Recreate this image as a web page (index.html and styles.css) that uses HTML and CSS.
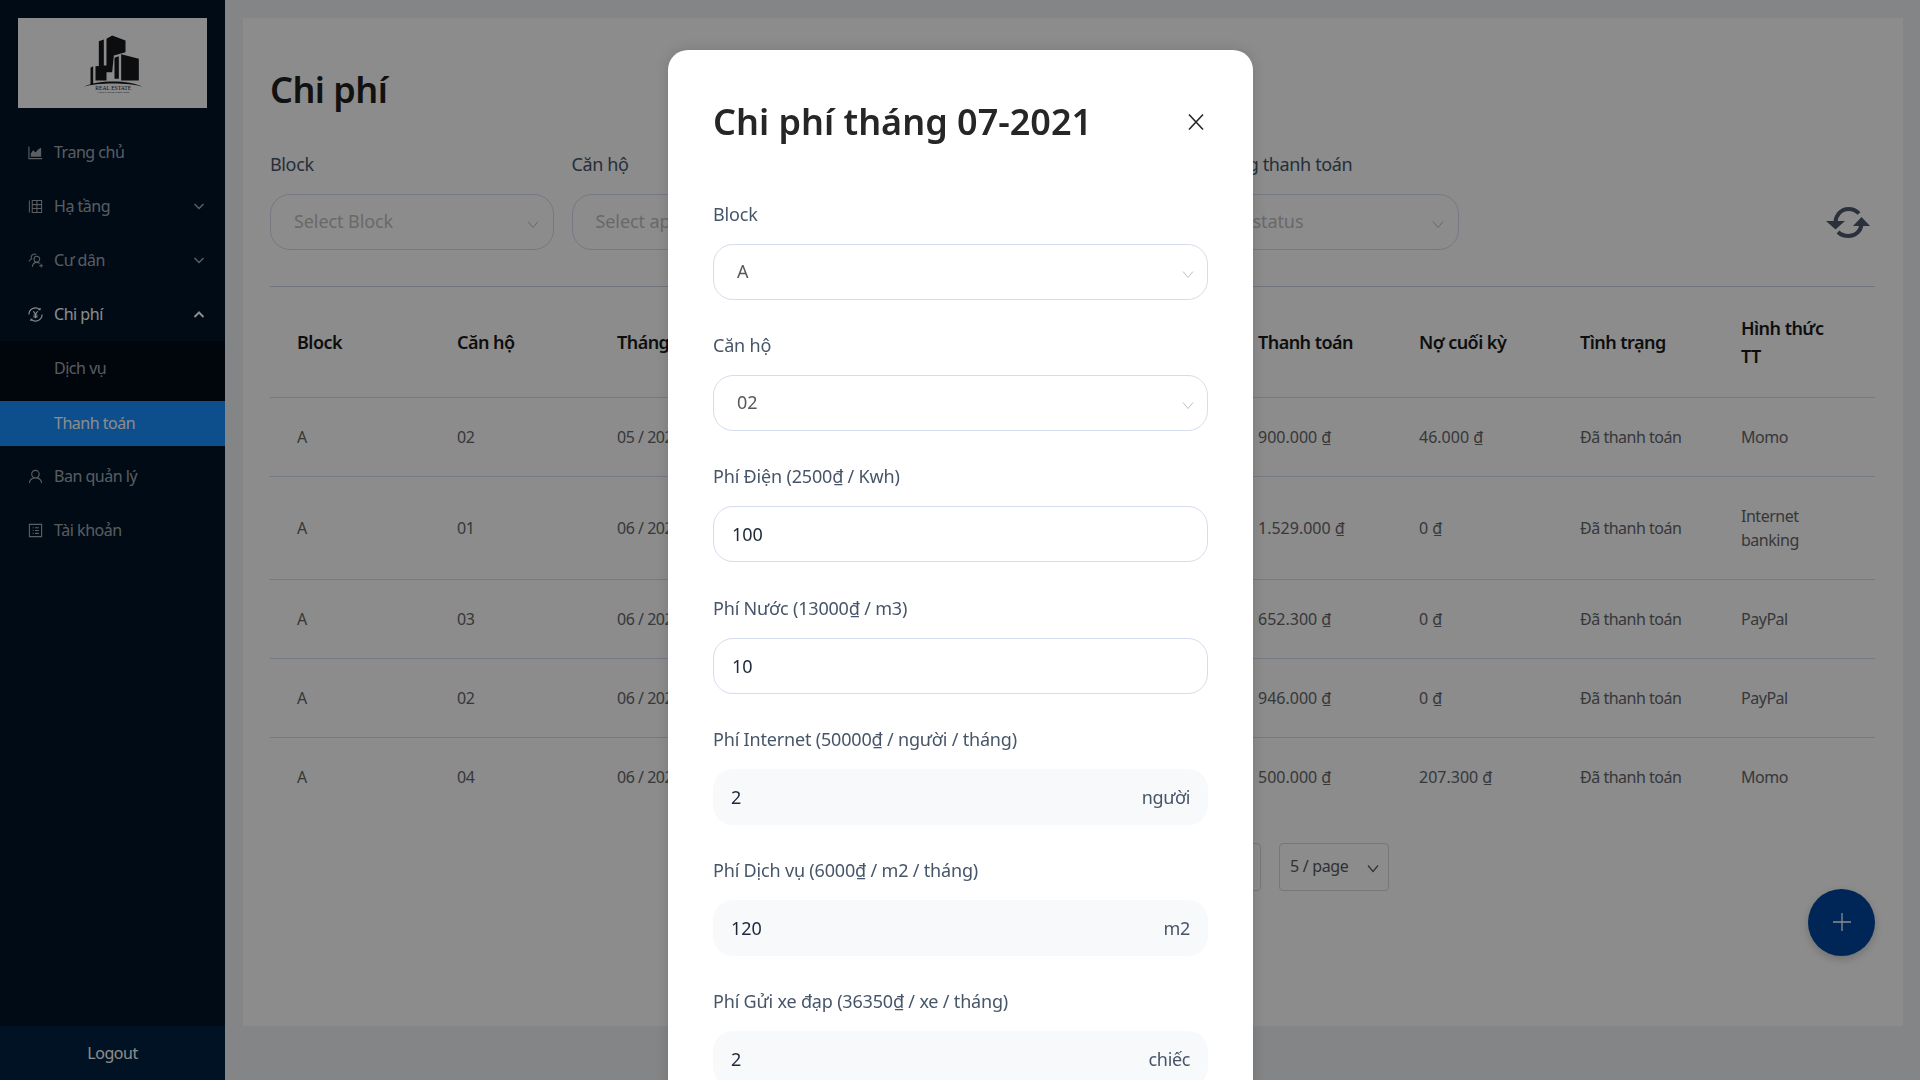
FILE: index.html
```html
<!DOCTYPE html>
<html lang="vi">
  <head>
    <meta charset="UTF-8" />
    <title>Chi phí</title>
    <link rel="stylesheet" href="styles.css">
  </head>
  <body>
    <!-- Sidebar -->
    <aside class="sidebar">
      <div class="logo">
        <svg width="100" height="100" viewBox="7.500 7.500 300 300">
          <path class="logo-dark" d="M115 92l15-5v98h-15zM138 85l17-10 40 15v35l-35 10-5 50h-17zM182 131l53 14v65h-53zM162 142l13-5v68h-13zM105 167l33-3v46h-33zM90 172l8-5v56h-8z" />
          <path class="logo-dark" d="M70 229C110 208 205 208 246 229C205 216 110 216 70 229z" />
          <text class="logo-title" x="158" y="238" text-anchor="middle">REAL ESTATE</text>
          <text class="logo-sub" x="158" y="248" text-anchor="middle">YOUR TAGLINE GOES HERE</text>
        </svg>
      </div>
      <nav class="menu">
        <a class="menu-item">
          <svg class="menu-icon" viewBox="0 0 16 16"><path d="M1 1.500v13h14" fill="none" stroke="currentColor" stroke-width="1.200" /><path d="M3 12.500V9l2.500-3.500L8 8l3-3.500 3-1.500v9.500z" fill="currentColor" /></svg>
          <span>Trang chủ</span>
        </a>
        <a class="menu-item">
          <svg class="menu-icon" viewBox="0 0 16 16" fill="none" stroke="currentColor" stroke-width="1.100"><path d="M1.500 1.500v13M4.500 1.500h10v13h-10zM4.500 6h10M4.500 10.200h10M9.500 1.500v13" /></svg>
          <span>Hạ tầng</span>
          <svg class="chevron" viewBox="0 0 12 12"><path d="M1.500 4l4.500 4.500L10.500 4" /></svg>
        </a>
        <a class="menu-item">
          <svg class="menu-icon" viewBox="0 0 16 16" fill="none" stroke="currentColor" stroke-width="1.100"><path d="M1 9c.8-1.600 1.800-2.300 3-2.800C3 5 3.200 2 5.800 1.300 7 1 8 1.300 8.700 2M9.500 3.500a3 3 0 1 1-.1 6 3 3 0 0 1 .1-6zM4.500 15c.3-2.800 2.300-5 5-5 1.200 0 2 .3 3 1M12 13.500h4M14 11.500v4" /></svg>
          <span>Cư dân</span>
          <svg class="chevron" viewBox="0 0 12 12"><path d="M1.500 4l4.500 4.500L10.500 4" /></svg>
        </a>
        <a class="menu-item menu-open">
          <svg class="menu-icon" viewBox="0 0 16 16" fill="none" stroke="currentColor" stroke-width="1.200"><path d="M1 8a7 7 0 0 1 11.500-5.400M15 8A7 7 0 0 1 3.500 13.400M11 3l1.800-.2L13 1M5 13l-1.800.2L3 15M5.700 4.500L8 7.500l2.300-3M5.800 8.500h4.400M8 7.500v4.500M5.800 10.500h4.400" /></svg>
          <span>Chi phí</span>
          <svg class="chevron chevron-up" viewBox="0 0 12 12"><path d="M1.500 8l4.500-4.500L10.500 8" /></svg>
        </a>
        <div class="submenu">
          <a class="submenu-item">Dịch vụ</a>
          <a class="submenu-item submenu-active">Thanh toán</a>
        </div>
        <a class="menu-item">
          <svg class="menu-icon" viewBox="0 0 16 16" fill="none" stroke="currentColor" stroke-width="1.200"><path d="M8 1.500a4 4 0 1 1-.1 8 4 4 0 0 1 .1-8zM1.500 15c.3-3.300 3-5.500 6.500-5.500s6.200 2.200 6.500 5.500" /></svg>
          <span>Ban quản lý</span>
        </a>
        <a class="menu-item">
          <svg class="menu-icon" viewBox="0 0 16 16" fill="none" stroke="currentColor" stroke-width="1.200"><path d="M1.500 1.500h13v13h-13zM5 5h1M5 8h1M5 11h1M7.500 5h4M7.500 8h4M7.500 11h4" /></svg>
          <span>Tài khoản</span>
        </a>
      </nav>
      <div class="logout">Logout</div>
    </aside>

    <!-- Page -->
    <main class="main">
      <section class="card">
        <h1 class="page-title">Chi phí</h1>
        <div class="filters">
          <div class="filter">
            <label class="filter-label">Block</label>
            <div class="filter-select"><span>Select Block</span><svg class="select-arrow" viewBox="0 0 12 12"><path d="M1 3.500l5 6 5-6" /></svg></div>
          </div>
          <div class="filter">
            <label class="filter-label">Căn hộ</label>
            <div class="filter-select"><span>Select apartment</span><svg class="select-arrow" viewBox="0 0 12 12"><path d="M1 3.500l5 6 5-6" /></svg></div>
          </div>
          <div class="filter">
            <label class="filter-label">Tháng</label>
            <div class="filter-select"><span>Select month</span><svg class="select-arrow" viewBox="0 0 12 12"><path d="M1 3.500l5 6 5-6" /></svg></div>
          </div>
          <div class="filter">
            <label class="filter-label">Tình trạng thanh toán</label>
            <div class="filter-select"><span>Select status</span><svg class="select-arrow" viewBox="0 0 12 12"><path d="M1 3.500l5 6 5-6" /></svg></div>
          </div>
          <svg class="refresh" viewBox="0 0 44 31">
            <path class="refresh-arc" d="M9.500 15C10 7.500 15.500 2 22.500 2c4.300 0 8 1.700 10.500 4.500" />
            <path class="refresh-arc" d="M35.500 17C35 24 29.500 29 22.500 29c-4.300 0-8-1.500-10.500-4" />
            <path d="M0 14h19l-9.500 8.500z" />
            <path d="M27 19h17l-8.500-9z" />
          </svg>
        </div>

        <table class="table">
          <thead>
            <tr>
              <th>Block</th><th>Căn hộ</th><th>Tháng</th><th></th><th></th><th></th>
              <th>Thanh toán</th><th>Nợ cuối kỳ</th><th>Tình trạng</th><th>Hình thức<br />TT</th>
            </tr>
          </thead>
          <tbody>
            <tr>
              <td>A</td><td>02</td><td>05 / 2021</td><td></td><td></td><td></td>
              <td class="money">900.000 ₫</td><td class="money">46.000 ₫</td><td>Đã thanh toán</td><td>Momo</td>
            </tr>
            <tr>
              <td>A</td><td>01</td><td>06 / 2021</td><td></td><td></td><td></td>
              <td class="money">1.529.000 ₫</td><td class="money">0 ₫</td><td>Đã thanh toán</td><td>Internet banking</td>
            </tr>
            <tr>
              <td>A</td><td>03</td><td>06 / 2021</td><td></td><td></td><td></td>
              <td class="money">652.300 ₫</td><td class="money">0 ₫</td><td>Đã thanh toán</td><td>PayPal</td>
            </tr>
            <tr>
              <td>A</td><td>02</td><td>06 / 2021</td><td></td><td></td><td></td>
              <td class="money">946.000 ₫</td><td class="money">0 ₫</td><td>Đã thanh toán</td><td>PayPal</td>
            </tr>
            <tr>
              <td>A</td><td>04</td><td>06 / 2021</td><td></td><td></td><td></td>
              <td class="money">500.000 ₫</td><td class="money">207.300 ₫</td><td>Đã thanh toán</td><td>Momo</td>
            </tr>
          </tbody>
        </table>

        <div class="pagination">
          <div class="page-box"></div>
          <div class="page-size"><span>5 / page</span><svg class="page-arrow" viewBox="0 0 12 12"><path d="M1 3.500l5 6 5-6" /></svg></div>
        </div>
        <div class="fab-row">
          <button class="fab"><svg viewBox="0 0 20 20"><path d="M10 1v18M1 10h18" /></svg></button>
        </div>
      </section>
    </main>

    <!-- Modal -->
    <div class="mask">
      <div class="modal">
        <div class="modal-head">
          <h2 class="modal-title">Chi phí tháng 07-2021</h2>
          <svg class="modal-close" viewBox="0 0 18 18"><path d="M2 1.500l14 15M16 1.500L2 16.500" /></svg>
        </div>
        <div class="field">
          <label class="field-label">Block</label>
          <div class="select"><span>A</span><svg class="select-arrow" viewBox="0 0 12 12"><path d="M1 3.500l5 6 5-6" /></svg></div>
        </div>
        <div class="field">
          <label class="field-label">Căn hộ</label>
          <div class="select"><span>02</span><svg class="select-arrow" viewBox="0 0 12 12"><path d="M1 3.500l5 6 5-6" /></svg></div>
        </div>
        <div class="field">
          <label class="field-label">Phí Điện (2500₫ / Kwh)</label>
          <div class="input">100</div>
        </div>
        <div class="field">
          <label class="field-label">Phí Nước (13000₫ / m3)</label>
          <div class="input">10</div>
        </div>
        <div class="field">
          <label class="field-label">Phí Internet (50000₫ / người / tháng)</label>
          <div class="input-readonly"><span>2</span><span class="suffix">người</span></div>
        </div>
        <div class="field">
          <label class="field-label">Phí Dịch vụ (6000₫ / m2 / tháng)</label>
          <div class="input-readonly"><span>120</span><span class="suffix">m2</span></div>
        </div>
        <div class="field">
          <label class="field-label">Phí Gửi xe đạp (36350₫ / xe / tháng)</label>
          <div class="input-readonly"><span>2</span><span class="suffix">chiếc</span></div>
        </div>
      </div>
    </div>
  </body>
</html>
```

FILE: styles.css
```css
* {
  box-sizing: border-box;
}
html,
body {
  height: 100%;
}
body {
  margin: 0;
  display: flex;
  height: 1080px;
  overflow: hidden;
  background: #f0f2f5;
  font-family: "Noto Sans", "Open Sans", sans-serif;
  font-size: 16px;
  color: #595959;
}

/* Sidebar */
.sidebar {
  width: 225px;
  flex: none;
  display: flex;
  flex-direction: column;
  background: #001529;
  letter-spacing: -0.03em;
}
.logo {
  margin: 18px 18px 0;
  height: 90px;
  background: #fff;
  display: flex;
  align-items: center;
  justify-content: center;
  overflow: hidden;
  letter-spacing: 0;
}
.logo-dark {
  fill: #17181c;
}
.logo-title {
  font-family: "Liberation Serif", serif;
  font-size: 17px;
  fill: #17181c;
}
.logo-sub {
  font-family: "Liberation Sans", sans-serif;
  font-size: 7px;
  fill: #444;
}
.menu {
  flex: 1;
  margin-top: 17px;
}
.menu-item {
  height: 54px;
  padding: 0 20px 0 28px;
  display: flex;
  align-items: center;
  color: rgba(255, 255, 255, 0.65);
}
.menu-icon {
  width: 15px;
  height: 15px;
  flex: none;
  margin-right: 11px;
}
.menu-open {
  color: #fff;
}
.chevron {
  width: 12px;
  height: 12px;
  margin-left: auto;
  fill: none;
  stroke: rgba(255, 255, 255, 0.65);
  stroke-width: 1.5;
}
.chevron-up {
  margin-top: 2px;
  stroke: #fff;
  stroke-width: 2;
}
.submenu {
  background: #000c17;
  padding-top: 1px;
  margin-bottom: 3px;
}
.submenu-item {
  display: flex;
  align-items: center;
  height: 45px;
  padding-left: 54px;
  color: rgba(255, 255, 255, 0.65);
}
.submenu-item:first-child {
  height: 59px;
  padding-bottom: 7px;
}
.submenu-active {
  padding-bottom: 2px;
  background: #1890ff;
  color: #fff;
}
.logout {
  height: 54px;
  background: #002140;
  color: #fff;
  display: flex;
  align-items: center;
  justify-content: center;
}

/* Page */
.main {
  flex: 1;
  padding: 18px 17px 54px 18px;
}
.card {
  height: 1008px;
  background: #fff;
  padding: 50px 28px 0 27px;
}
.page-title {
  margin: 0;
  font-size: 36px;
  line-height: 44px;
  font-weight: 600;
  letter-spacing: -0.015em;
  color: #1f1f1f;
}
.filters {
  display: flex;
  gap: 17.5px;
  margin-top: 39px;
  padding-bottom: 36px;
  border-bottom: 1px solid #cbd5e1;
}
.filter {
  width: 284px;
}
.filter-label {
  display: block;
  font-size: 18px;
  line-height: 26px;
  margin-bottom: 17px;
  letter-spacing: -0.02em;
  color: #475569;
}
.filter-select {
  height: 56px;
  padding: 0 14px 2px 23px;
  border: 1px solid #d5dcec;
  border-radius: 20px;
  display: flex;
  align-items: center;
  justify-content: space-between;
  font-size: 18px;
  letter-spacing: -0.005em;
  color: #bfbfbf;
}
.select-arrow {
  width: 12px;
  height: 12px;
  margin-top: 6px;
  fill: none;
  stroke: #bfbfbf;
  stroke-width: 1;
}
.refresh {
  width: 44px;
  height: 31px;
  margin-left: auto;
  margin-right: 5px;
  margin-top: 56px;
  fill: #4e5a6e;
}
.refresh-arc {
  fill: none;
  stroke: #4e5a6e;
  stroke-width: 4;
}

/* Table */
.table {
  width: 100%;
  border-collapse: collapse;
  table-layout: fixed;
}
.table th {
  width: 161px;
  height: 110px;
  padding: 0 27px;
  font-size: 18px;
  line-height: 28px;
  font-weight: 600;
  letter-spacing: -0.03em;
  text-align: left;
  color: #1a1a1a;
  border-bottom: 1px solid #d5dcec;
}
.table th:nth-child(1),
.table th:nth-child(2),
.table th:nth-child(5) {
  width: 160px;
}
.table th:nth-child(6) {
  width: 159px;
}
.table td {
  padding: 27px;
  font-size: 16px;
  line-height: 24px;
  letter-spacing: -0.03em;
  color: #64666a;
  border-bottom: 1px solid #d5dcec;
}
.table td.money {
  letter-spacing: 0;
}
.table tbody tr:last-child td {
  border-bottom: none;
}
.pagination {
  display: flex;
  justify-content: flex-end;
  gap: 18px;
  margin-top: 27px;
  padding-right: 486px;
}
.page-box {
  width: 46px;
  height: 48px;
  border: 1px solid #d9d9d9;
  border-radius: 4px;
}
.page-size {
  width: 110px;
  height: 48px;
  padding: 0 9px 2px 10px;
  border: 1px solid #d9d9d9;
  border-radius: 4px;
  display: flex;
  align-items: center;
  justify-content: space-between;
  letter-spacing: -0.02em;
  color: #595959;
}
.page-arrow {
  width: 12px;
  height: 12px;
  margin-top: 5px;
  fill: none;
  stroke: #595959;
  stroke-width: 1.2;
}
.fab-row {
  display: flex;
  justify-content: flex-end;
  margin-top: -2px;
}
.fab {
  width: 67px;
  height: 67px;
  padding: 0;
  border: none;
  border-radius: 50%;
  background: #00449e;
  box-shadow: 0 3px 8px rgba(0, 0, 0, 0.2);
  display: flex;
  align-items: center;
  justify-content: center;
}
.fab svg {
  width: 20px;
  height: 20px;
  fill: none;
  stroke: #fff;
  stroke-width: 1.3;
}

/* Modal */
.mask {
  position: fixed;
  inset: 0;
  background: rgba(0, 0, 0, 0.45);
  overflow: hidden;
}
.modal {
  width: 585px;
  margin: 50px 0 0 668px;
  padding: 0 45px 40px;
  background: #fff;
  border-radius: 20px;
  box-shadow: 0 0 16px rgba(0, 0, 0, 0.15);
}
.modal-head {
  display: flex;
  align-items: center;
  justify-content: space-between;
  height: 151px;
  padding: 0 3px 7px 0;
}
.modal-title {
  margin: 0 0 2px;
  font-size: 36px;
  font-weight: 600;
  color: #262626;
}
.modal-close {
  width: 18px;
  height: 18px;
  fill: none;
  stroke: #262626;
  stroke-width: 1.6;
}
.field {
  margin-bottom: 32.2px;
}
.field-label {
  display: block;
  font-size: 18px;
  line-height: 26px;
  margin-bottom: 17px;
  letter-spacing: -0.01em;
  color: #475569;
}
.select,
.input,
.input-readonly {
  height: 56px;
  border-radius: 20px;
  display: flex;
  align-items: center;
  font-size: 18px;
}
.select {
  padding: 0 13px 2px 23px;
  border: 1px solid #d5dcec;
  justify-content: space-between;
  color: #595959;
}
.input {
  padding: 0 18px;
  border: 1px solid #d5dcec;
  color: #1e293b;
}
.input-readonly {
  padding: 0 18px;
  background: #f8f9fb;
  justify-content: space-between;
  color: #1e293b;
}
.suffix {
  letter-spacing: -0.02em;
  color: #475569;
}
```
